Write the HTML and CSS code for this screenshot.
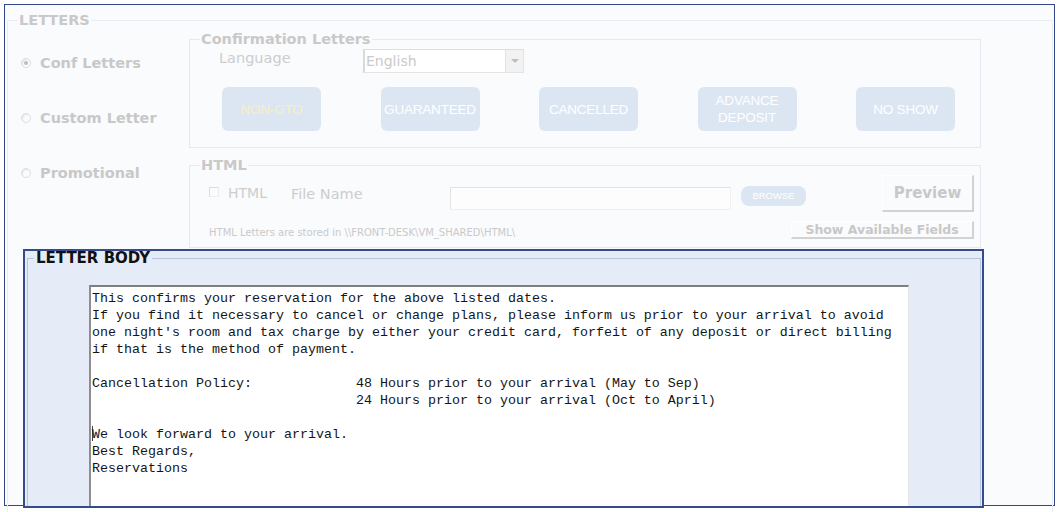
FILE: index.html
```html
<!DOCTYPE html>
<html>
<head>
<meta charset="utf-8">
<link rel="stylesheet" href="styles.css">
</head>
<body>
<div class="frame">
  <fieldset class="letters">
    <legend class="lg-letters">LETTERS</legend>
    <div class="top-row">
      <div class="radios">
        <div class="radio-item"><span class="radio checked"></span><span class="radio-label">Conf Letters</span></div>
        <div class="radio-item"><span class="radio"></span><span class="radio-label">Custom Letter</span></div>
        <div class="radio-item"><span class="radio"></span><span class="radio-label">Promotional</span></div>
      </div>
      <div class="right-col">
        <fieldset class="box conf">
          <legend class="lg-box">Confirmation Letters</legend>
          <div class="lang-row">
            <span class="lang-label">Language</span>
            <div class="select"><span class="select-text">English</span><span class="select-arrow"><span class="tri"></span></span></div>
          </div>
          <div class="btn-row">
            <div class="tbtn yellow">NON-GTO</div>
            <div class="tbtn">GUARANTEED</div>
            <div class="tbtn">CANCELLED</div>
            <div class="tbtn">ADVANCE<br>DEPOSIT</div>
            <div class="tbtn">NO SHOW</div>
          </div>
        </fieldset>
        <fieldset class="box html">
          <legend class="lg-box">HTML</legend>
          <div class="html-row1">
            <span class="checkbox"></span>
            <span class="chk-label">HTML</span>
            <span class="fn-label">File Name</span>
            <span class="fn-input"></span>
            <span class="browse">BROWSE</span>
            <span class="btn3d preview">Preview</span>
          </div>
          <div class="html-row2">
            <span class="note">HTML Letters are stored in \\FRONT-DESK\VM_SHARED\HTML\</span>
            <span class="btn3d fields">Show Available Fields</span>
          </div>
        </fieldset>
      </div>
    </div>
    <div class="letter-body">
      <fieldset class="lb-set">
        <legend class="lg-body">LETTER BODY</legend>
        <div class="editor">This confirms your reservation for the above listed dates.
If you find it necessary to cancel or change plans, please inform us prior to your arrival to avoid
one night's room and tax charge by either your credit card, forfeit of any deposit or direct billing
if that is the method of payment.

Cancellation Policy:             48 Hours prior to your arrival (May to Sep)
                                 24 Hours prior to your arrival (Oct to April)

<span class="caret"></span>We look forward to your arrival.
Best Regards,
Reservations</div>
      </fieldset>
    </div>
  </fieldset>
</div>
</body>
</html>
```

FILE: styles.css
```css
* { box-sizing: border-box; }
html, body { margin: 0; padding: 0; background: #ffffff; }
body { width: 1060px; height: 512px; overflow: hidden; font-family: "DejaVu Sans", Verdana, sans-serif; }

.frame {
  margin: 4px 0 0 4px;
  width: 1051px;
  height: 502px;
  border: 1px solid #34458a;
  background: #f9fbfd;
  padding: 7px 1px 0 2px;
}

fieldset { margin: 0; padding: 0; min-width: 0; }
legend { padding: 0 1px; }

.letters {
  border: 1px solid #e8eef6;
  border-bottom: none;
  height: 520px;
}
.lg-letters {
  margin-left: 10px;
  font-weight: bold;
  font-size: 14.5px;
  line-height: 16px;
  color: #c9c9c9;
}

.top-row { display: flex; }
.radios { width: 181px; display: flex; flex-direction: column; padding-top: 26px; gap: 37px; }
.radio-item { display: flex; align-items: center; height: 18px; padding-left: 13px; }
.radio {
  width: 10px; height: 10px; border-radius: 50%;
  border: 1px solid #dedede; background: #fbfbfb;
  margin-right: 9px; position: relative;
  box-shadow: inset 1px 1px 1px #e6e6e6;
}
.radio.checked::after {
  content: ""; position: absolute; left: 2px; top: 2px; width: 4px; height: 4px;
  border-radius: 50%; background: #bdbdbd;
}
.radio-label { font-weight: bold; font-size: 14.5px; line-height: 18px; color: #c8c8c8; }

.right-col { width: 792px; margin-top: 3px; }
.box { border: 1px solid #e3eaf4; }
.lg-box {
  margin-left: 10px;
  font-weight: bold;
  font-size: 14.5px;
  line-height: 16px;
  color: #c9c9c9;
}
.conf { padding-bottom: 16px; }
.lang-row { display: flex; align-items: flex-start; margin-top: 2px; padding-left: 29px; }
.lang-label { width: 144px; font-size: 14.5px; line-height: 18px; color: #cdcdcd; }
.select {
  width: 161px; height: 24px; display: flex;
  border: 1px solid #e4e4e4; border-left: 2px solid #d9d9d9; border-top: 1px solid #dedede;
  background: #ffffff;
}
.select-text { flex: 1; font-size: 14px; line-height: 22px; color: #cacaca; padding-left: 1px; }
.select-arrow {
  width: 18px; height: 22px; background: #f2f2f2; border-left: 1px solid #e2e2e2;
  display: flex; align-items: center; justify-content: center;
}
.tri { width: 0; height: 0; border-left: 4px solid transparent; border-right: 4px solid transparent; border-top: 4px solid #bdbdbd; }

.btn-row { display: flex; gap: 59.5px; margin-top: 14px; padding-left: 32px; }
.tbtn {
  width: 99px; height: 44px; border-radius: 6px; background: #dce6f2;
  display: flex; align-items: center; justify-content: center; text-align: center;
  font-family: "Liberation Sans", Arial, sans-serif; font-size: 13.5px; line-height: 17px;
  color: #ffffff; letter-spacing: -0.2px;
}
.tbtn.yellow { color: #f6efc4; }

.html { margin-top: 9px; padding-bottom: 8px; padding-right: 6px; }
.html-row1 { display: flex; align-items: flex-start; margin-top: 2px; height: 37px; }
.checkbox {
  width: 10px; height: 10px; margin-left: 19px; margin-top: 12px;
  border: 1px solid #dcdcdc; border-right-color: #ececec; border-bottom-color: #ececec; background: #fcfcfc;
}
.chk-label { margin-left: 9px; margin-top: 9px; width: 63px; font-size: 14px; line-height: 18px; color: #cdcdcd; }
.fn-label { margin-top: 10px; width: 159px; font-size: 14.5px; line-height: 18px; color: #cdcdcd; }
.fn-input {
  width: 281px; height: 23px; margin-top: 12px;
  border: 1px solid #f0f0f0; border-top-color: #e3e3e3; border-left-color: #e3e3e3; background: #fdfdfd;
}
.browse {
  margin-left: 10px; margin-top: 11px; width: 65px; height: 20px; border-radius: 8px;
  background: #dce6f2; color: #ffffff;
  font-family: "Liberation Sans", Arial, sans-serif; font-size: 9.5px; line-height: 20px; text-align: center;
}
.btn3d {
  display: flex; align-items: center; justify-content: center;
  border-top: 1px solid #ffffff; border-left: 1px solid #ffffff;
  border-right: 2px solid #d2d2d2; border-bottom: 2px solid #d2d2d2;
  font-weight: bold; color: #c8c8c8;
}
.preview { margin-left: 76px; width: 92px; height: 37px; font-size: 15px; }
.html-row2 { display: flex; align-items: flex-start; margin-top: 9px; height: 18px; }
.note { margin-left: 19px; margin-top: 3px; font-size: 10px; line-height: 18px; color: #cacaca; }
.fields { margin-left: auto; width: 183px; height: 18px; font-size: 12.5px; line-height: 14px; }

.letter-body {
  margin-top: 1px; margin-left: 15px;
  width: 961px; height: 259px;
  border: 2px solid #364a8e;
  background: #e5ecf7;
  overflow: hidden;
}
.lb-set {
  margin: 0 1px 0 2px;
  border: 1px solid #b6c3dc;
  height: 300px;
}
.lg-body {
  margin-left: 6px; padding: 0 2px;
  font-weight: bold; font-size: 15px; line-height: 14px; color: #111111;
}
.editor {
  margin-top: 20px; margin-left: 61px;
  width: 820px; height: 240px;
  background: #ffffff;
  border-top: 2px solid #7f7f7f; border-left: 2px solid #8e8e8e; border-right: 1px solid #e4e4e4;
  padding: 3px 1px;
  font-family: "Liberation Mono", "Courier New", monospace;
  font-size: 13.33px; line-height: 17px; color: #151515;
  white-space: pre;
}
.caret {
  display: inline-block; width: 1px; height: 15px; margin-right: -1px;
  background: #444444; vertical-align: -3px;
}
```
